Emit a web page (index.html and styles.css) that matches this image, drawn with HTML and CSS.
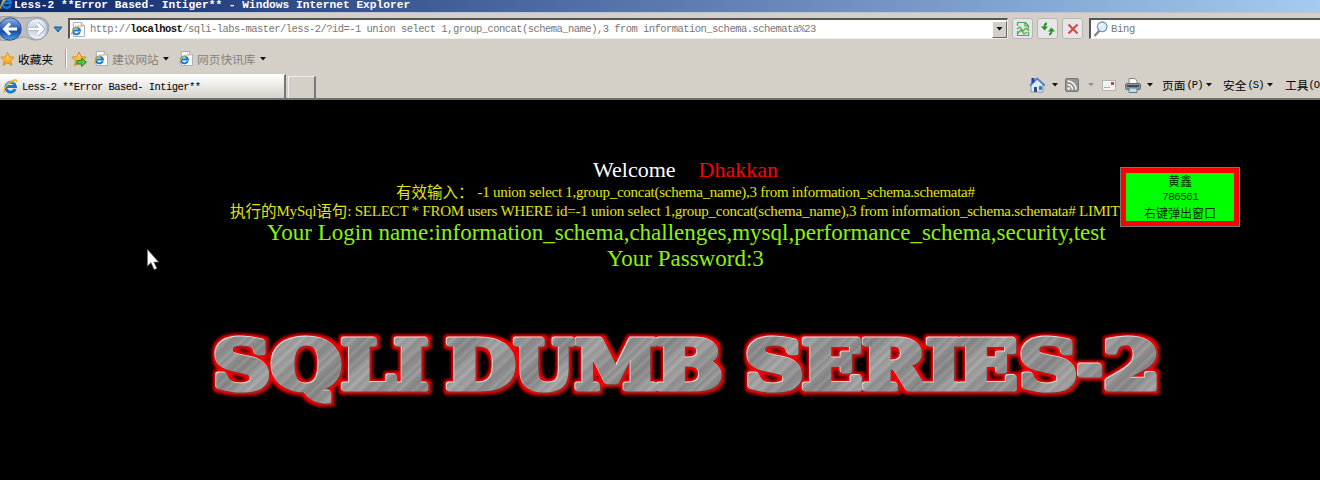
FILE: index.html
```html
<!DOCTYPE html>
<html lang="zh-CN">
<head>
<meta charset="utf-8">
<title>Less-2 **Error Based- Intiger**</title>
<link rel="stylesheet" href="styles.css">
</head>
<body>
<svg class="defs" width="0" height="0" aria-hidden="true">
  <defs>
    <linearGradient id="blue" x1="0" y1="0" x2="0" y2="1"><stop offset="0" stop-color="#8fb4e4"/><stop offset=".45" stop-color="#3564b8"/><stop offset=".6" stop-color="#174ba8"/><stop offset="1" stop-color="#4fa5e6"/></linearGradient>
    <linearGradient id="pale" x1="0" y1="0" x2="0" y2="1"><stop offset="0" stop-color="#f4f6fa"/><stop offset=".5" stop-color="#c3cddd"/><stop offset="1" stop-color="#f0f6fc"/></linearGradient>
    <linearGradient id="gold" x1="0" y1="0" x2="0" y2="1"><stop offset="0" stop-color="#ffe27a"/><stop offset="1" stop-color="#f79a10"/></linearGradient>
    <symbol id="ie" viewBox="0 0 16 16">
      <path d="M13 10.6A5.2 5.2 0 1 1 13.3 8H4.5" fill="none" stroke="#1878cc" stroke-width="3"/>
      <path d="M12 4.2A5.2 5.2 0 0 0 3.3 7" fill="none" stroke="#4db4ee" stroke-width="1.4"/>
      <path d="M1.6 14.8C-.8 12 4 5.200 9 2.500 12.300.700 15.400.300 14.800 3.400" fill="none" stroke="#f2b21c" stroke-width="1.500"/>
    </symbol>
    <symbol id="page" viewBox="0 0 16 16">
      <path d="M2.500.500H11L14.500 4V15.500H2.500Z" fill="#fbfcff" stroke="#a5a9b4"/><path d="M11 .500V4h3.500" fill="#dfe4ee" stroke="#a5a9b4"/>
      <svg x="0" y="3" width="11.500" height="12" viewBox="0 0 16 16"><use href="#ie"/></svg>
    </symbol>
    <symbol id="star" viewBox="0 0 16 16"><path d="M8 1l2.100 4.700 5 .500-3.800 3.400 1.200 5L8 12.100l-4.500 2.500 1.200-5L.900 6.200l5-.500Z" fill="url(#gold)" stroke="#d78a18"/></symbol>
    <symbol id="down" viewBox="0 0 6 4"><path d="M0 0h6L3 3.500Z" fill="currentColor"/></symbol>
  </defs>
</svg>

<div class="window">
  <header class="titlebar">
    <svg class="title-icon" width="13" height="14" viewBox="0 0 16 16"><use href="#ie"/></svg>
    <span class="title-text">Less-2 **Error Based- Intiger** - Windows Internet Explorer</span>
  </header>

  <div class="navrow">
    <svg class="navbuttons" width="66" height="26" viewBox="0 0 66 26">
      <path d="M0 1C8-1 16 2 23 2S43-2 48 7c3 8-3 17-12 17-6 0-8-3-12-3S9 26 0 24Z" fill="#bcbdc0" stroke="#999a9e"/>
      <circle cx="10" cy="13" r="11.200" fill="url(#blue)" stroke="#315792"/>
      <circle cx="37" cy="13" r="10.500" fill="url(#pale)" stroke="#96a1b5"/>
      <path d="M17 13H5M10 7.500 4.500 13 10 18.500" fill="none" stroke="#fff" stroke-width="3"/>
      <path d="M29 13h13M37 7.500 42.500 13 37 18.500" fill="none" stroke="#a2adbd" stroke-width="4"/>
      <path d="M29 13h13M37 7.500 42.500 13 37 18.500" fill="none" stroke="#fff" stroke-width="2.600"/>
      <path d="M54 11h8l-4 5Z" fill="#2f91cf" stroke="#24599a"/>
    </svg>
    <div class="address">
      <svg width="15" height="15"><use href="#page"/></svg>
      <span class="mono url">http://<b>localhost</b>/sqli-labs-master/less-2/?id=-1 union select 1,group_concat(schema_name),3 from information_schema.schemata%23</span>
      <span class="combo"><svg width="7" height="4"><use href="#down"/></svg></span>
    </div>
    <span class="navbtn"><svg width="14" height="16" viewBox="0 0 14 16"><path d="M1.500 5V1.500h8L12.500 5v3M1.500 10v4.500h11V11M9 2v3h3M1 8l3-2 3 4 3-3 3 3M2 12l3-3 3 4 3-2" fill="none" stroke="#45ac48" stroke-width="1.200"/></svg></span>
    <span class="navbtn"><svg width="14" height="14" viewBox="0 0 14 14"><path d="M6 1.500C3.800 1.500 3.500 3 3.500 5M8 12.500c2.200 0 2.500-1.500 2.500-3.500" fill="none" stroke="#259526" stroke-width="1.800"/><path d="M0 4.500h7L3.500 8.500ZM7 9.500 10.500 5.500l3.500 4Z" fill="#259526"/></svg></span>
    <span class="navbtn"><svg width="12" height="12" viewBox="0 0 12 12"><path d="M1.500 1.500l9 9M10.500 1.500l-9 9" stroke="#d54848" stroke-width="2.100"/></svg></span>
    <div class="search">
      <svg width="16" height="16" viewBox="0 0 16 16"><path d="M6.500 9.500 1.500 15" stroke="#8b8178" stroke-width="2.400"/><circle cx="9.200" cy="5.800" r="4.800" fill="#d9efff" stroke="#8398ad" stroke-width="1.300"/><path d="M6.500 5.500A3 3 0 0 1 10 3" stroke="#fff" fill="none"/></svg>
      <span class="mono bing">Bing</span>
    </div>
  </div>

  <div class="favrow">
    <svg width="15" height="16"><use href="#star"/></svg>
    <span class="cjk fav-label">收藏夹</span>
    <i class="divider"></i>
    <svg class="addstar" width="16" height="16" viewBox="0 0 16 16"><use href="#star"/><path d="M6 9.500h4.500V7L15.500 11.200 10.500 15.500V13H6Z" fill="#4fc43d" stroke="#278d26"/></svg>
    <svg class="suggest-icon" width="15" height="15"><use href="#page"/></svg>
    <span class="cjk muted suggest">建议网站</span>
    <svg class="arrow" width="6" height="4"><use href="#down"/></svg>
    <svg class="slice-icon" width="15" height="15"><use href="#page"/></svg>
    <span class="cjk muted slice">网页快讯库</span>
    <svg class="arrow" width="6" height="4"><use href="#down"/></svg>
  </div>

  <div class="tabrow">
    <div class="tab"><svg width="15" height="15"><use href="#ie"/></svg><span class="mono tab-text">Less-2 **Error Based- Intiger**</span></div>
    <div class="newtab"></div>
    <div class="commands">
      <svg class="home" width="17" height="16" viewBox="0 0 17 16"><path d="M2 8v7h12V8L8 2Z" fill="#dceafa" stroke="#7896bb"/><path d="M1 8.500 8.200 1.500 15.800 8.500" fill="none" stroke="#5b80be" stroke-width="1.800"/><path d="M2.500 1h3v4l-3 2Z" fill="#293bd1"/><path d="M5 10h3v5H5Z" fill="#334e77"/><path d="M10 9h3v4h-3Z" fill="#2684bf"/></svg>
      <svg class="arrow" width="6" height="4"><use href="#down"/></svg>
      <svg class="rss" width="14" height="14" viewBox="0 0 14 14"><rect x=".5" y=".5" width="13" height="13" rx="1.500" fill="#959595" stroke="#777"/><circle cx="3.700" cy="10.500" r="1.300" fill="#fff"/><path d="M2.500 6.500a5 5 0 0 1 5 5M2.500 3a8.500 8.500 0 0 1 8.500 8.500" fill="none" stroke="#fff" stroke-width="1.500"/></svg>
      <svg class="arrow pale" width="6" height="4"><use href="#down"/></svg>
      <svg class="mail" width="14" height="11" viewBox="0 0 14 11"><rect x=".5" y=".5" width="13" height="10" fill="#f5f4f5" stroke="#b7b1b5"/><path d="M9 2h3v3H9Z" fill="#d84038"/><path d="M2 7.500h6" stroke="#aaa"/></svg>
      <svg class="print" width="16" height="15" viewBox="0 0 16 15"><path d="M4 6V.5h6L12 3v3Z" fill="#fafafa" stroke="#888"/><rect x=".5" y="5.500" width="15" height="6" rx="1.500" fill="#91969d" stroke="#696d73"/><path d="M2 8h12" stroke="#34383d" stroke-width="1.600"/><path d="M4 10h8v4.500H4Z" fill="#bce0f3" stroke="#60798d"/></svg>
      <svg class="arrow" width="6" height="4"><use href="#down"/></svg>
      <span class="cjk command">页面<span class="mono key">(P)</span></span>
      <svg class="arrow" width="6" height="4"><use href="#down"/></svg>
      <span class="cjk command safe">安全<span class="mono key">(S)</span></span>
      <svg class="arrow" width="6" height="4"><use href="#down"/></svg>
      <span class="cjk command tools">工具<span class="mono key">(O</span></span>
    </div>
  </div>

  <main class="page">
    <p class="line welcome">Welcome<span class="name">Dhakkan</span></p>
    <p class="line input"><span class="cn">有效输入：</span><span class="query">-1 union select 1,group_concat(schema_name),3 from information_schema.schemata#</span></p>
    <p class="line sql"><span class="cn">执行的</span>MySql<span class="cn">语句</span>: SELECT * FROM users WHERE id=-1 union select 1,group_concat(schema_name),3 from information_schema.schemata# LIMIT</p>
    <p class="line login">Your Login name:information_schema,challenges,mysql,performance_schema,security,test</p>
    <p class="line password">Your Password:3</p>
    <svg class="banner" width="1320" height="110" viewBox="0 310 1320 110">
      <defs>
        <linearGradient id="metal" gradientUnits="userSpaceOnUse" x1="0" y1="0" x2="47" y2="50" spreadMethod="repeat">
          <stop offset="0" stop-color="#8e8e8e"/><stop offset=".04" stop-color="#9c9c9c"/><stop offset=".07" stop-color="#8a8a8a"/><stop offset=".13" stop-color="#a0a0a0"/><stop offset=".16" stop-color="#8d8d8d"/><stop offset=".24" stop-color="#838383"/><stop offset=".27" stop-color="#949494"/><stop offset=".33" stop-color="#7f7f7f"/><stop offset=".4" stop-color="#959595"/><stop offset=".43" stop-color="#888"/><stop offset=".52" stop-color="#a2a2a2"/><stop offset=".56" stop-color="#969696"/><stop offset=".62" stop-color="#ababab"/><stop offset=".66" stop-color="#979797"/><stop offset=".74" stop-color="#a3a3a3"/><stop offset=".79" stop-color="#8b8b8b"/><stop offset=".88" stop-color="#9a9a9a"/><stop offset=".92" stop-color="#868686"/><stop offset="1" stop-color="#8e8e8e"/>
        </linearGradient>
        <filter id="glow" x="180" y="310" width="1010" height="110" filterUnits="userSpaceOnUse" color-interpolation-filters="sRGB">
          <feMorphology in="SourceAlpha" operator="dilate" radius="3" result="fat"/>
          <feGaussianBlur in="fat" stdDeviation="1.500" result="soft"/>
          <feFlood flood-color="#f80000"/><feComposite in2="soft" operator="in" result="red"/>
          <feOffset in="SourceAlpha" dx="-.6" dy="-.6" result="up"/>
          <feFlood flood-color="#ddd"/><feComposite in2="up" operator="in" result="light"/>
          <feOffset in="SourceAlpha" dx=".8" dy=".8" result="dn"/>
          <feFlood flood-color="#803434"/><feComposite in2="dn" operator="in" result="dark"/>
          <feMerge><feMergeNode in="red"/><feMergeNode in="dark"/><feMergeNode in="light"/><feMergeNode in="SourceGraphic"/></feMerge>
        </filter>
      </defs>
      <text class="banner-text" y="389" fill="url(#metal)" stroke="url(#metal)" filter="url(#glow)"><tspan x="213" textLength="58" lengthAdjust="spacingAndGlyphs">S</tspan><tspan x="271" textLength="71" lengthAdjust="spacingAndGlyphs">Q</tspan><tspan x="341" textLength="55" lengthAdjust="spacingAndGlyphs">L</tspan><tspan x="394" textLength="35" lengthAdjust="spacingAndGlyphs">I</tspan> <tspan x="446" textLength="70" lengthAdjust="spacingAndGlyphs">D</tspan><tspan x="514" textLength="60" lengthAdjust="spacingAndGlyphs">U</tspan><tspan x="575" textLength="83" lengthAdjust="spacingAndGlyphs">M</tspan><tspan x="656" textLength="67" lengthAdjust="spacingAndGlyphs">B</tspan> <tspan x="745" textLength="59" lengthAdjust="spacingAndGlyphs">S</tspan><tspan x="802" textLength="61" lengthAdjust="spacingAndGlyphs">E</tspan><tspan x="862" textLength="65" lengthAdjust="spacingAndGlyphs">R</tspan><tspan x="926" textLength="36" lengthAdjust="spacingAndGlyphs">I</tspan><tspan x="958" textLength="60" lengthAdjust="spacingAndGlyphs">E</tspan><tspan x="1019" textLength="59" lengthAdjust="spacingAndGlyphs">S</tspan><tspan x="1077" textLength="26" lengthAdjust="spacingAndGlyphs">-</tspan><tspan x="1103" textLength="58" lengthAdjust="spacingAndGlyphs">2</tspan></text>
    </svg>
  </main>
  <aside class="popup"><span>黄鑫</span><span class="mono number">786561</span><span>右键弹出窗口</span></aside>
  <svg class="cursor" width="12" height="22" viewBox="0 0 12 22"><path d="M.5.500V17L4 13.600l3.200 7 2.600-1.200-3-6.400h4.700Z" fill="#fff" stroke="#777" stroke-width=".7"/></svg>
</div>
</body>
</html>
```
FILE: styles.css
```css
* { box-sizing: border-box; }
body { margin: 0; background: #000; overflow: hidden; }
svg { display: block; flex: none; }
.defs { position: absolute; }
.window { position: relative; width: 1320px; height: 480px; overflow: hidden; background: #000; }
.mono { font-family: "Liberation Mono", monospace; white-space: pre; }
.cjk { font: 11.7px/16px "Noto Sans CJK SC", sans-serif; white-space: nowrap; color: #000; }

.titlebar { display: flex; align-items: flex-start; height: 13px; border-bottom: 1px solid #bcc4ce; background: linear-gradient(90deg, #0e286c, #a6caf0); overflow: hidden; }
.title-icon { margin-top: -4px; }
.title-text { font: bold 11.2px/12px "Liberation Mono", monospace; color: #fff; white-space: pre; margin: -1px 0 0 1px; }

.navrow { display: flex; height: 31px; background: #d4d0c8; padding-top: 5px; }
.navbuttons { margin: -2px 2px 0 0; }
.address { display: flex; flex: none; align-items: center; width: 940px; height: 21px; background: #fff; border: 1px solid #eee; border-top: 2px solid #55565a; border-left: 2px solid #55565a; padding-left: 1px; }
.url { flex: 1; margin-left: 4px; font-size: 10.5px; letter-spacing: -.541px; color: #777; }
.url b { color: #111; }
.combo { display: grid; place-items: center; width: 15px; height: 17px; background: #d4d0c8; border: 1px solid; border-color: #fff #666 #666 #fff; }
.navbtn { display: grid; flex: none; place-items: center; width: 21px; height: 21px; margin-left: 4px; background: #e6e5e8; border: 1px solid #b6b5b7; border-radius: 3px; }
.search { display: flex; align-items: center; margin-left: 6px; width: 240px; height: 21px; background: #fff; border-top: 2px solid #55565a; border-left: 2px solid #55565a; border-bottom: 1px solid #eee; padding-left: 2px; flex: none; }
.bing { margin-left: 2px; font-size: 10.5px; letter-spacing: -.3px; color: #777; }

.favrow { display: flex; align-items: center; height: 30px; background: #d4d0c8; color: #111; padding-bottom: 1px; }
.fav-label { width: 36px; margin-left: 3px; }
.divider { width: 2px; height: 19px; margin-left: 11px; background: #fff; border-left: 1px solid #aaa69e; }
.addstar { margin-left: 4px; }
.suggest-icon { margin-left: 7px; }
.muted { color: #85827e; }
.suggest { width: 48px; margin-left: 3px; }
.slice-icon { margin-left: 10px; }
.slice { width: 60px; margin-left: 3px; }
.arrow { margin-left: 3px; color: #111; }
.pale { color: #98958f; }

.tabrow { display: flex; height: 26px; background: #d4d0c8; border-bottom: 2px solid #707070; }
.tab { display: flex; flex: none; align-items: center; width: 286px; padding-left: 3px; border-right: 2px solid #777; border-top: 1px solid #fff; background: linear-gradient(#fff, #d5d2cb); }
.tab-text { margin-left: 4px; font-size: 10.5px; letter-spacing: -.54px; color: #000; }
.newtab { flex: none; width: 28px; margin: 2px 0 0 2px; border: 1px solid #f0efec; border-right: 2px solid #777; border-bottom: 0; }
.commands { display: flex; flex: none; align-items: center; margin-left: 713px; padding-bottom: 2px; }
.commands > * { flex: none; }
.commands > .arrow { margin-left: 6px; }
.rss { margin-left: 7px; }
.commands > .pale { margin-left: 9px; }
.mail { margin-left: 8px; }
.print { margin-left: 9px; }
.commands > .print + .arrow { margin-left: 6px; }
.command { display: flex; width: 41px; margin-left: 9px; }
.commands > .command + .arrow { margin-left: 3px; }
.key { font-size: 10.5px; letter-spacing: -.9px; margin-left: 1px; }
.commands > .safe { margin-left: 11px; }
.commands > .tools { width: 34px; margin-left: 12px; }
.tools .key { margin-left: 0; }

.page { height: 380px; padding-top: 58px; background: #000; color: #ff0; }
.line { display: flex; align-items: center; margin: 0; font-family: "Liberation Serif", serif; white-space: pre; }
.cn { font: 15.5px/18px "Noto Sans CJK SC", sans-serif; letter-spacing: 0; margin-top: -2px; }
.welcome { height: 24px; padding-left: 593px; color: #fff; font-size: 22px; }
.name { color: #f00; margin-left: 23px; }
.input { height: 20px; padding-left: 396px; font-size: 15px; letter-spacing: -.265px; color: #e2e211; }
.query { margin-left: 4px; }
.sql { height: 18px; padding-left: 230px; font-size: 15px; letter-spacing: -.23px; color: #e2e211; }
.login { height: 25px; padding-left: 267px; font-size: 23px; color: #8df20b; }
.password { height: 27px; padding-left: 607px; font-size: 23px; color: #8df20b; }
.banner { margin-top: 38px; }
.banner-text { font: bold 68px "DejaVu Serif", serif; stroke-width: 5px; stroke-linejoin: round; }

.popup { position: absolute; left: 1120px; top: 167px; width: 120px; height: 60px; border: 1px solid #777; background: #0f0; box-shadow: inset 0 0 0 5px #f00; display: flex; flex-direction: column; align-items: center; padding-top: 5px; font: 12px/16px "Noto Sans CJK SC", sans-serif; color: #002600; }
.number { font-size: 11.5px; letter-spacing: -.9px; }
.cursor { position: absolute; left: 147px; top: 249px; }
```
